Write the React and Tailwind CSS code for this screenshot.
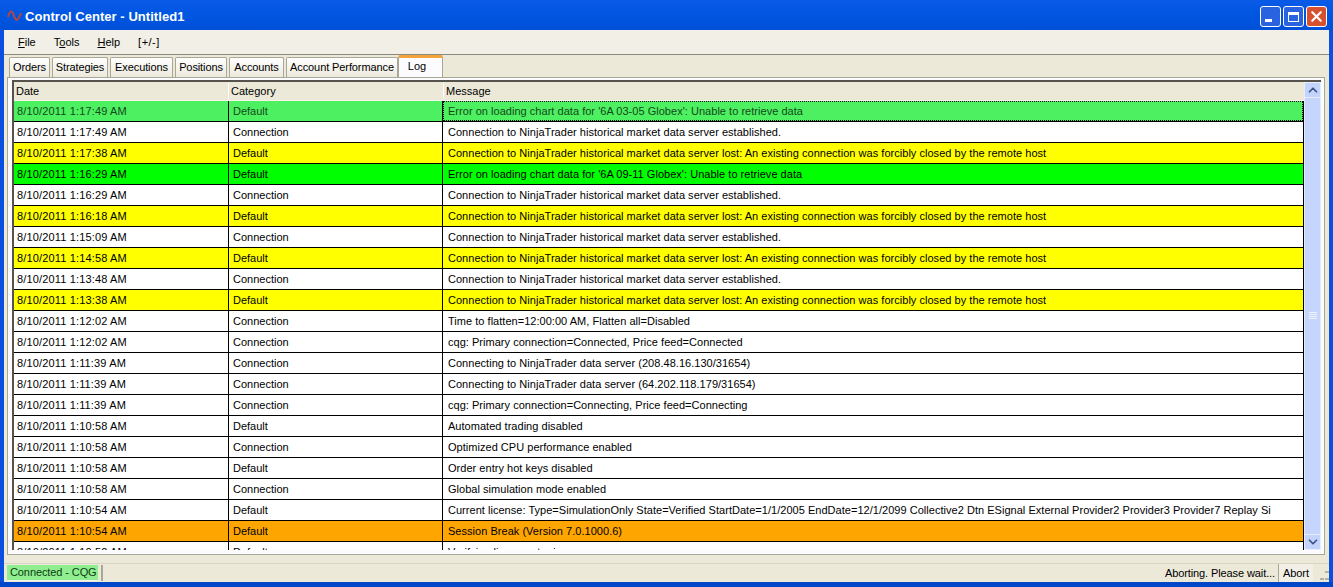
import React from 'react';
import { ChevronUp, ChevronDown, X } from 'lucide-react';

const font = { fontFamily: '"Liberation Sans", Arial, sans-serif' };

const tabs = ['Orders', 'Strategies', 'Executions', 'Positions', 'Accounts', 'Account Performance'];
const tabWidths = ['w-[41px]', 'w-[56px]', 'w-[63px]', 'w-[52px]', 'w-[55px]', 'w-[112px]'];

const lost = 'Connection to NinjaTrader historical market data server lost: An existing connection was forcibly closed by the remote host';
const established = 'Connection to NinjaTrader historical market data server established.';

const rows = [
  ['8/10/2011 1:17:49 AM', 'Default', "Error on loading chart data for '6A 03-05 Globex': Unable to retrieve data", 'bg-[#4cf060]'],
  ['8/10/2011 1:17:49 AM', 'Connection', established, 'bg-white'],
  ['8/10/2011 1:17:38 AM', 'Default', lost, 'bg-[#ffff00]'],
  ['8/10/2011 1:16:29 AM', 'Default', "Error on loading chart data for '6A 09-11 Globex': Unable to retrieve data", 'bg-[#00ff00]'],
  ['8/10/2011 1:16:29 AM', 'Connection', established, 'bg-white'],
  ['8/10/2011 1:16:18 AM', 'Default', lost, 'bg-[#ffff00]'],
  ['8/10/2011 1:15:09 AM', 'Connection', established, 'bg-white'],
  ['8/10/2011 1:14:58 AM', 'Default', lost, 'bg-[#ffff00]'],
  ['8/10/2011 1:13:48 AM', 'Connection', established, 'bg-white'],
  ['8/10/2011 1:13:38 AM', 'Default', lost, 'bg-[#ffff00]'],
  ['8/10/2011 1:12:02 AM', 'Connection', 'Time to flatten=12:00:00 AM, Flatten all=Disabled', 'bg-white'],
  ['8/10/2011 1:12:02 AM', 'Connection', 'cqg: Primary connection=Connected, Price feed=Connected', 'bg-white'],
  ['8/10/2011 1:11:39 AM', 'Connection', 'Connecting to NinjaTrader data server (208.48.16.130/31654)', 'bg-white'],
  ['8/10/2011 1:11:39 AM', 'Connection', 'Connecting to NinjaTrader data server (64.202.118.179/31654)', 'bg-white'],
  ['8/10/2011 1:11:39 AM', 'Connection', 'cqg: Primary connection=Connecting, Price feed=Connecting', 'bg-white'],
  ['8/10/2011 1:10:58 AM', 'Default', 'Automated trading disabled', 'bg-white'],
  ['8/10/2011 1:10:58 AM', 'Connection', 'Optimized CPU performance enabled', 'bg-white'],
  ['8/10/2011 1:10:58 AM', 'Default', 'Order entry hot keys disabled', 'bg-white'],
  ['8/10/2011 1:10:58 AM', 'Connection', 'Global simulation mode enabled', 'bg-white'],
  ['8/10/2011 1:10:54 AM', 'Default', 'Current license: Type=SimulationOnly State=Verified StartDate=1/1/2005 EndDate=12/1/2099 Collective2 Dtn ESignal External Provider2 Provider3 Provider7 Replay Si', 'bg-white'],
  ['8/10/2011 1:10:54 AM', 'Default', 'Session Break (Version 7.0.1000.6)', 'bg-[#ffa500]'],
  ['8/10/2011 1:10:52 AM', 'Default', 'Verifying license at primary server', 'bg-white'],
];

const Underline = ({ children }) => <span className="underline">{children}</span>;

const CaptionButton = ({ className, children }) => (
  <div className={`w-[21px] h-[21px] rounded-[3px] border border-white flex items-center justify-center text-white ${className}`}>
    {children}
  </div>
);

const ScrollButton = ({ children }) => (
  <div className="h-[16px] w-[17px] shrink-0 rounded-[2px] bg-[#c3d3fb] border border-[#e6edff] flex items-center justify-center text-[#3a5488]">
    {children}
  </div>
);

export default function App() {
  return (
    <div className="w-[1333px] h-[587px] flex flex-col overflow-hidden text-[11px] text-black bg-[#0a4fe0]" style={font}>
      <div className="h-[30px] shrink-0 flex items-center pt-[3px] pl-[7px] pr-[6px] bg-gradient-to-b from-[#0a5ae8] via-[#0056e0] to-[#0050d8]">
        <svg width="16" height="14" viewBox="0 0 16 14" className="mr-[2px] -mt-[2px]">
          <path d="M1 8 C3 1 5 1 7 7 C9 13 11 12 14 4" fill="none" stroke="#b5473f" strokeWidth="2" />
        </svg>
        <span className="text-white font-bold text-[13px] tracking-[0.05px]">Control Center - Untitled1</span>
        <div className="ml-auto flex gap-[2px]">
          <CaptionButton className="bg-[#2a63e0]">
            <div className="w-[7px] h-[3px] bg-white mt-[8px] mr-[5px]" />
          </CaptionButton>
          <CaptionButton className="bg-[#2a63e0]">
            <div className="w-[11px] h-[10px] border border-white border-t-[3px]" />
          </CaptionButton>
          <CaptionButton className="bg-[#d8512f]">
            <X size={17} strokeWidth={3} />
          </CaptionButton>
        </div>
      </div>

      <div className="flex-1 min-h-0 mx-[4px] flex flex-col bg-[#ece9d8]">
        <div className="h-[25px] shrink-0 flex items-center pl-[14px] gap-[18px] bg-[#f1efe6] border-b border-[#8c8a80]">
          <span><Underline>F</Underline>ile</span>
          <span>T<Underline>o</Underline>ols</span>
          <span><Underline>H</Underline>elp</span>
          <span className="tracking-[0.5px]">[+/-]</span>
        </div>

        <div className="h-[22px] shrink-0 flex items-end pl-[5px] pt-[1px] bg-[#ece9d8]">
          {tabs.map((t, i) => (
            <div key={t} className={`${tabWidths[i]} h-[20px] mr-[2px] shrink-0 flex items-center justify-center rounded-t-[2px] border border-b-0 border-[#a9a796] bg-gradient-to-b from-white to-[#ece9dc] tracking-[-0.1px]`}>
              {t}
            </div>
          ))}
          <div className="w-[45px] h-[22px] -ml-[2px] shrink-0 bg-[#fcfcfe] border-t-[3px] border-[#f2a33a] rounded-t-[2px] border-x border-x-[#a9a796] flex justify-center pr-[7px]">
            Log
          </div>
        </div>

        <div className="flex-1 min-h-0 ml-[3px] mr-[4px] mb-[8px] bg-[#fcfcfe] border border-[#a9a796] p-[4px] pt-[2px] pr-[3px] flex">
          <div className="flex-1 min-h-0 flex border-l-2 border-t-2 border-[#55534c] overflow-hidden">
            <div className="flex-1 min-w-0 flex flex-col overflow-hidden bg-white">
              <div className="h-[19px] shrink-0 flex items-center bg-[#ece9d8] border-b border-[#f5f3ea]">
                <div className="w-[215px] pl-[2px] shrink-0 border-r border-[#fff]">Date</div>
                <div className="w-[215px] pl-[2px] shrink-0 border-r border-[#fff]">Category</div>
                <div className="pl-[2px]">Message</div>
              </div>
              {rows.map((r, i) => (
                <div key={i} className={`h-[21px] shrink-0 flex items-center border-b border-black border-r ${r[3]} ${i === 0 ? 'text-[#14491b]' : ''}`}>
                  <div className="w-[215px] h-full shrink-0 pl-[3px] flex items-center border-r border-black tracking-[0.15px]">{r[0]}</div>
                  <div className="w-[214px] h-full shrink-0 pl-[4px] flex items-center border-r border-black">{r[1]}</div>
                  <div className={`flex-1 min-w-0 h-full pl-[5px] flex items-center whitespace-nowrap overflow-hidden tracking-[0.03px] ${i === 0 ? 'outline-1 -outline-offset-1 outline-dotted outline-black' : ''}`}>{r[2]}</div>
                </div>
              ))}
            </div>
            <div className="w-[17px] shrink-0 flex flex-col bg-[#f3f4fb]">
              <ScrollButton><ChevronUp size={14} strokeWidth={3} /></ScrollButton>
              <div className="flex-1 flex items-center justify-center bg-[#c5d5fb] border-x border-[#e4ebff]">
                <div className="w-[8px] h-[8px] flex flex-col gap-px">
                  <div className="h-px bg-[#eef3ff]" />
                  <div className="h-px bg-[#eef3ff]" />
                  <div className="h-px bg-[#eef3ff]" />
                  <div className="h-px bg-[#eef3ff]" />
                </div>
              </div>
              <ScrollButton><ChevronDown size={14} strokeWidth={3} /></ScrollButton>
            </div>
          </div>
        </div>

        <div className="h-[19px] shrink-0 flex items-center bg-[#ece9d8] border-t border-[#d8d5c4] pl-[3px]">
          <div className="w-[91px] h-[16px] shrink-0 flex items-center pl-[3px] bg-[#90ee90] text-[#0b3d12] tracking-[-0.1px] border-b border-[#f5f3ea]">Connected - CQG</div>
          <div className="w-[2px] h-[16px] ml-[3px] bg-[#a9a796]" />
          <div className="ml-auto whitespace-nowrap pr-[3px] tracking-[-0.1px]">Aborting. Please wait...</div>
          <div className="w-[35px] h-[18px] flex items-center justify-center border-l border-[#a9a796] bg-[#f1efe6] tracking-[-0.1px]">Abort</div>
          <div className="w-[14px] h-[14px] ml-[2px] grid grid-cols-3 gap-px items-end">
            <span /><span /><span className="h-[2px] bg-[#b5b2a2]" />
            <span /><span className="h-[2px] bg-[#b5b2a2]" /><span className="h-[2px] bg-[#b5b2a2]" />
          </div>
        </div>
      </div>

      <div className="h-[5px] shrink-0 bg-[#0046c8]" />
    </div>
  );
}
